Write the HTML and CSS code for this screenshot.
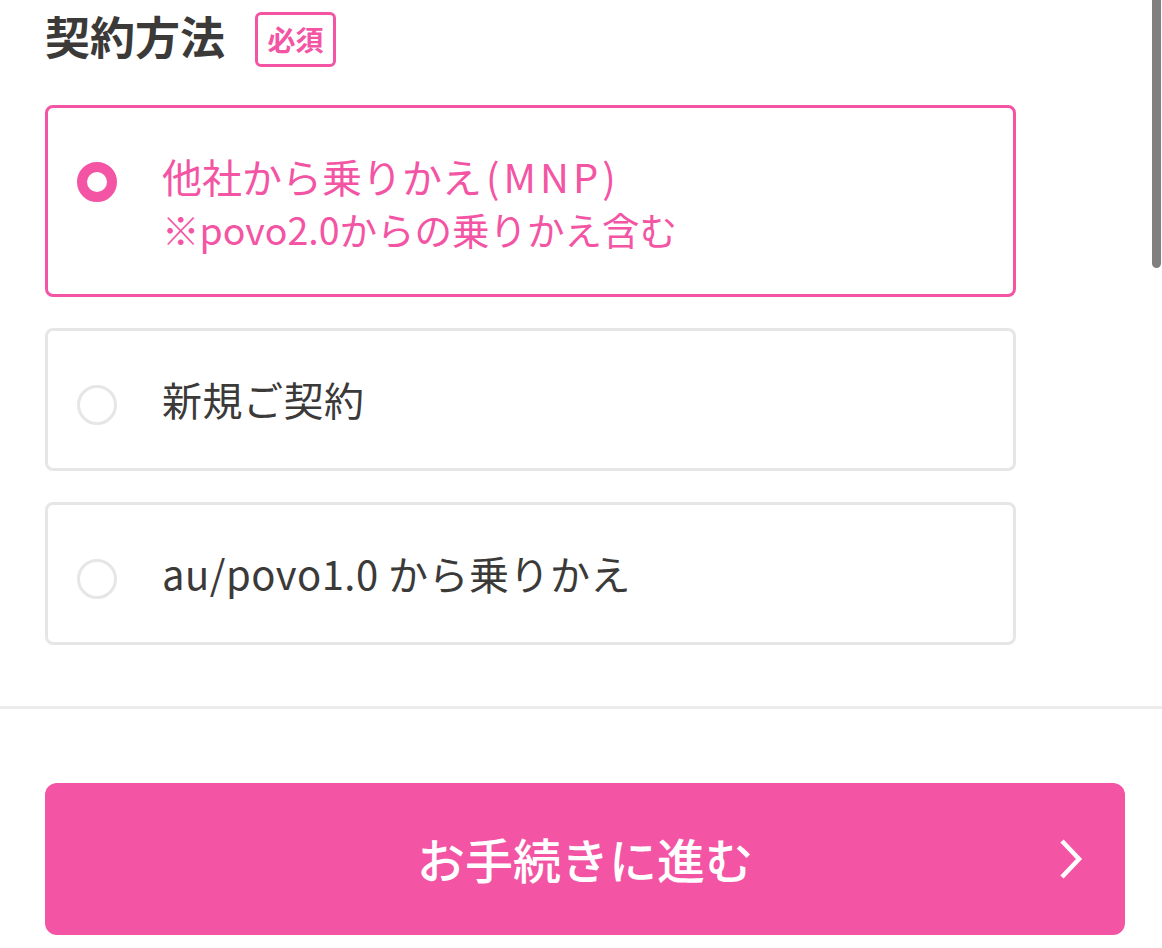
FILE: index.html
```html
<!DOCTYPE html>
<html lang="ja">
<head>
<meta charset="utf-8">
<title>契約方法</title>
<link rel="stylesheet" href="styles.css">
</head>
<body>
<div class="page">
  <section class="section">
    <div class="title-row">
      <h2 class="title">契約方法</h2>
      <span class="badge">必須</span>
    </div>
    <div class="options">
      <label class="option option--checked">
        <span class="radio radio--checked"></span>
        <span class="option-text">
          <span class="option-main">他社から乗りかえ<span class="latin">(MNP)</span></span>
          <span class="option-note">※povo2.0からの乗りかえ含む</span>
        </span>
      </label>
      <label class="option">
        <span class="radio"></span>
        <span class="option-text">
          <span class="option-main">新規ご契約</span>
        </span>
      </label>
      <label class="option">
        <span class="radio"></span>
        <span class="option-text">
          <span class="option-main">au/povo1.0 から乗りかえ</span>
        </span>
      </label>
    </div>
  </section>
  <hr class="divider">
  <div class="actions">
    <button class="next-btn" type="button">
      <span class="next-label">お手続きに進む</span>
      <svg class="chevron" width="26" height="40" viewBox="0 0 26 40" aria-hidden="true">
        <path d="M4 2 L21 20 L4 38" fill="none" stroke="#ffffff" stroke-width="4.5"/>
      </svg>
    </button>
  </div>
  <div class="scrollbar"></div>
</div>
</body>
</html>
```
FILE: styles.css
```css
* { box-sizing: border-box; }
html, body { margin: 0; padding: 0; background: #ffffff; }
body {
  font-family: "Noto Sans CJK JP", "Noto Sans", sans-serif;
  color: #3b3a39;
}
.page {
  position: relative;
  width: 1162px;
  height: 948px;
  overflow: hidden;
}
.section {
  padding: 12px 0 0 45px;
}
.title-row {
  display: flex;
  align-items: center;
  gap: 30px;
  height: 55px;
}
.title {
  margin: 0;
  font-size: 45px;
  font-weight: 700;
  line-height: 45px;
  padding-bottom: 8px;
  color: #3b3a39;
}
.badge {
  display: flex;
  align-items: center;
  justify-content: center;
  width: 81px;
  height: 55px;
  border: 3px solid #f354a4;
  border-radius: 6px;
  color: #f354a4;
  font-size: 28px;
  font-weight: 700;
  line-height: 1;
  padding-bottom: 2px;
}
.options {
  display: flex;
  flex-direction: column;
  gap: 31px;
  margin-top: 38px;
  width: 971px;
}
.option {
  display: flex;
  align-items: flex-start;
  gap: 45px;
  padding: 40px 30px 40px 29px;
  border: 3px solid #e6e6e6;
  border-radius: 8px;
  background: #fff;
}
.option--checked {
  border-color: #f354a4;
  padding-bottom: 41px;
}
.radio {
  flex: 0 0 auto;
  width: 40px;
  height: 40px;
  margin-top: 14px;
  border-radius: 50%;
  border: 3px solid #e6e6e6;
  background: #fff;
}
.radio--checked {
  border: 10px solid #f354a4;
}
.option-text {
  display: flex;
  flex-direction: column;
  font-size: 40px;
  line-height: 57px;
  color: #3b3a39;
  letter-spacing: 0.012em;
}
.option--checked .option-text { color: #f354a4; letter-spacing: 0; }
.latin {
  letter-spacing: 0.1em;
  margin-left: 4px;
}
.option-note {
  font-size: 37.5px;
  line-height: 48px;
}
.divider {
  margin: 61px 0 0;
  border: 0;
  height: 3px;
  background: #ececec;
}
.actions {
  padding: 74px 37px 0 45px;
}
.next-btn {
  position: relative;
  display: flex;
  align-items: center;
  justify-content: center;
  width: 100%;
  height: 152px;
  border: 0;
  border-radius: 12px;
  background: #f355a4;
  color: #fff;
  font-family: "Noto Sans CJK JP", "Noto Sans", sans-serif;
  font-size: 48px;
  font-weight: 500;
  padding: 0;
}
.next-label { line-height: 1; padding-bottom: 2px; }
.chevron {
  position: absolute;
  right: 41px;
  top: 56px;
}
.scrollbar {
  position: absolute;
  top: 0;
  right: 1px;
  width: 9px;
  height: 268px;
  background: #808080;
  border-radius: 0 0 5px 5px;
}
```
